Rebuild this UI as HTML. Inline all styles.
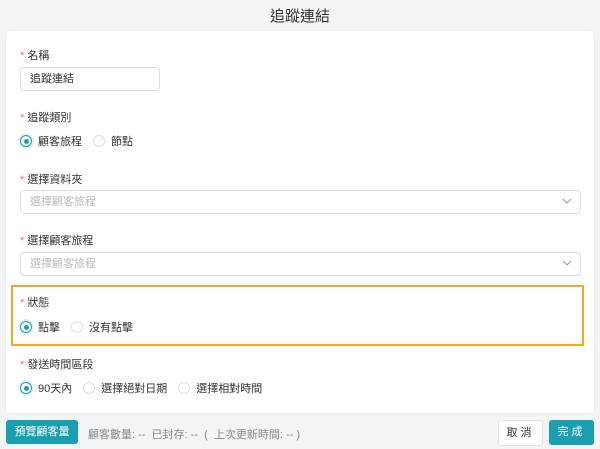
<html><head><style>
body{margin:0;width:600px;height:449px;background:#f3f4f6;font-family:"Liberation Sans","Noto Sans CJK TC",sans-serif;position:relative;overflow:hidden;color:#333}
.a{position:absolute}
.t{font-size:15px;color:#333;left:0;width:600px;text-align:center;top:5px}
.card{left:6px;top:31px;width:588px;height:382px;background:#fff;border-radius:4px;box-shadow:0 0 2px rgba(0,0,0,.1)}
.lab{font-size:11px;color:#333}
.lab:before{content:"* ";color:#f56c6c}
.in{border:1px solid #dcdfe6;border-radius:4px;height:22px;font-size:11px;line-height:22px;padding-left:9px;box-sizing:content-box}
.sel{color:#bbb}
.r{font-size:11px;display:flex;align-items:center}
.c{width:12px;height:12px;border:1px solid #dcdfe6;border-radius:50%;margin-right:6px;box-sizing:border-box;position:relative}
.c.on{border-color:#1a9fb0;box-shadow:0 0 0 2px rgba(26,159,176,.15)}
.c.on:after{content:"";position:absolute;left:2.5px;top:2.5px;width:5px;height:5px;border-radius:50%;background:#1a9fb0}
.r .g{margin-left:11px}
.btn{font-size:11px;border-radius:3px;text-align:center;line-height:24px;height:24px}
</style></head><body>
<div class="a t">追蹤連結</div>
<div class="a card"></div>
<div class="a lab" style="left:20px;top:47px">名稱</div>
<div class="a in" style="left:20px;top:67px;width:129px">追蹤連結</div>
<div class="a lab" style="left:20px;top:109px">追蹤類別</div>
<div class="a r" style="left:20px;top:133px"><span class="c on"></span>顧客旅程<span class="c g"></span>節點</div>
<div class="a lab" style="left:20px;top:171px">選擇資料夾</div>
<div class="a in sel" style="left:20px;top:190px;width:550px">選擇顧客旅程</div>
<svg class="a" style="left:562px;top:198px" width="10" height="6"><path d="M1 1l4 4 4-4" fill="none" stroke="#999"/></svg>
<div class="a lab" style="left:20px;top:232px">選擇顧客旅程</div>
<div class="a in sel" style="left:20px;top:252px;width:550px">選擇顧客旅程</div>
<svg class="a" style="left:562px;top:260px" width="10" height="6"><path d="M1 1l4 4 4-4" fill="none" stroke="#999"/></svg>
<div class="a" style="left:11px;top:285px;width:569px;height:57px;border:2px solid #f5a623"></div>
<div class="a lab" style="left:20px;top:294px">狀態</div>
<div class="a r" style="left:20px;top:319px"><span class="c on"></span>點擊<span class="c g"></span>沒有點擊</div>
<div class="a lab" style="left:20px;top:356px">發送時間區段</div>
<div class="a r" style="left:20px;top:380px"><span class="c on"></span>90天內<span class="c g"></span>選擇絕對日期<span class="c g"></span>選擇相對時間</div>
<div class="a btn" style="left:6px;top:420px;width:72px;background:#1a9fb0;color:#fff">預覽顧客量</div>
<div class="a" style="left:88px;top:426px;font-size:11px;color:#888">顧客數量: --&nbsp; 已封存: --&nbsp; (&nbsp; 上次更新時間: -- )</div>
<div class="a btn" style="left:498px;top:420px;width:43px;background:#fff;border:1px solid #e3e3e3;letter-spacing:3px">取消</div>
<div class="a btn" style="left:549px;top:420px;width:45px;background:#1a9fb0;color:#fff;letter-spacing:3px;line-height:25px;height:25px">完成</div>
</body></html>
